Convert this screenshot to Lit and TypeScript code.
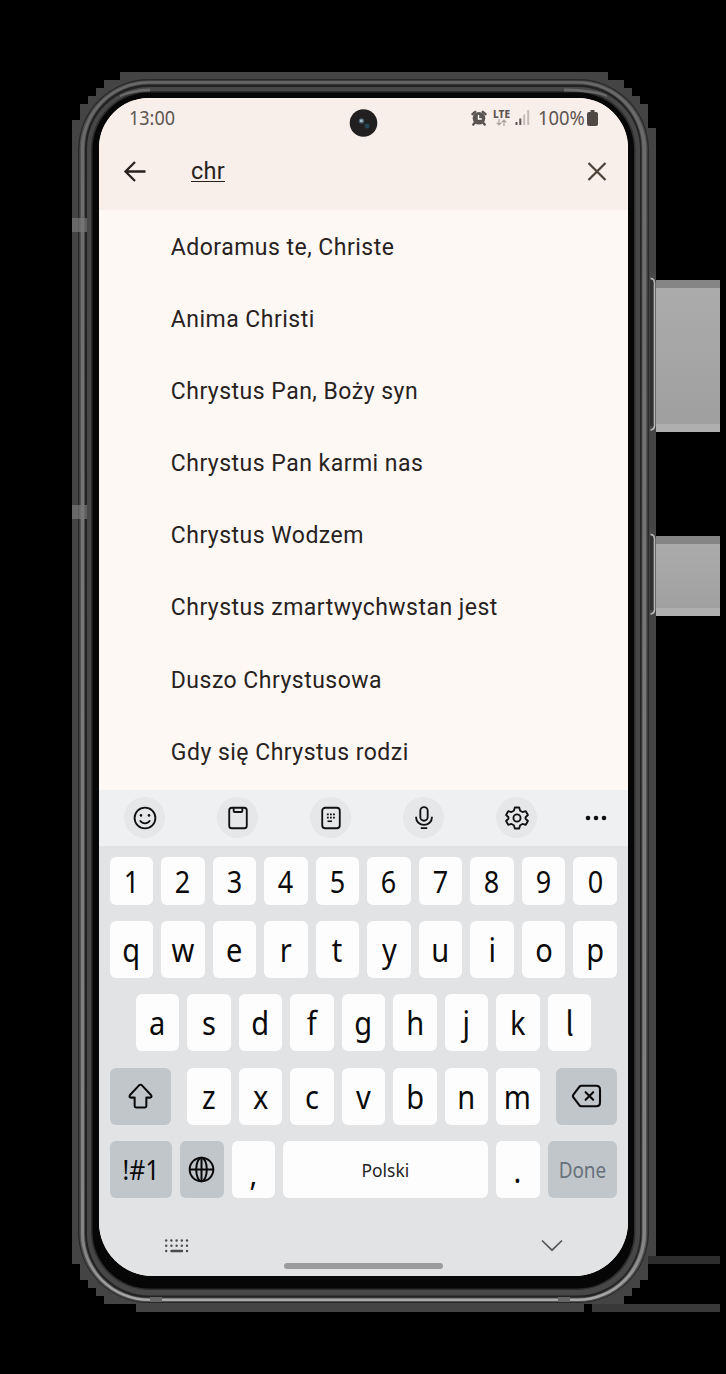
import { LitElement, html, css, svg, nothing } from "lit";
import { customElement, property } from "lit/decorators.js";

const SONGS = [
  "Adoramus te, Christe",
  "Anima Christi",
  "Chrystus Pan, Boży syn",
  "Chrystus Pan karmi nas",
  "Chrystus Wodzem",
  "Chrystus zmartwychwstan jest",
  "Duszo Chrystusowa",
  "Gdy się Chrystus rodzi",
];

const ICONS: Record<string, unknown> = {
  smile: svg`<circle cx="12" cy="12" r="9.600"/><path d="M7.300 14.200c1 1.700 2.700 2.700 4.700 2.700s3.700-1 4.700-2.700"/><g fill="currentColor" stroke="none"><circle cx="8.300" cy="9.600" r="1.200"/><circle cx="15.700" cy="9.600" r="1.200"/></g>`,
  clipboard: svg`<rect x="3.900" y="2.500" width="16.200" height="19" rx="2.400"/><path d="M8 2.500v3q0 1 1 1h6q1 0 1-1v-3"/>`,
  textpad: svg`<rect x="3.900" y="2.500" width="16.200" height="19" rx="2.800"/><g stroke-width="1.500" stroke-dasharray="1.700 1.150"><path d="M8.200 8.700h8M8.200 11.700h8"/></g><path stroke-width="1.500" d="M8.800 15h4.200"/>`,
  mic: svg`<rect x="8.600" y="2" width="6.800" height="12.500" rx="3.400"/><path d="M4.700 10.800v.8a7.300 6.700 0 0 0 14.600 0v-.8M9 21.400h6"/>`,
  gear: svg`<path d="M10 2.300h4l.9 3 2.200 1.200 3-.8 2 3.500-2.200 2.100v1.400l2.200 2.100-2 3.500-3-.8-2.200 1.200-.9 3h-4l-.9-3-2.200-1.200-3 .8-2-3.500 2.200-2.100v-1.400l-2.200-2.100 2-3.500 3 .8 2.200-1.200z"/><circle cx="12" cy="12" r="3.300"/>`,
  shift: svg`<path d="M10.700 2.100q1.300-1.200 2.600 0l8 8.600q1.200 1.800-.6 2.300h-3.500v7.500q0 1.300-1.300 1.300H8.100q-1.300 0-1.300-1.300V13H3.300q-1.800-.5-.6-2.300z"/>`,
  globe: svg`<circle cx="12" cy="12" r="10.500"/><ellipse cx="12" cy="12" rx="4.700" ry="10.500"/><path d="M12 1.500v21M1.500 12h21"/>`,
};

@customElement("kb-key")
class KbKey extends LitElement {
  @property() label = "";
  @property() icon = "";
  @property({ reflect: true }) kind = "";
  static styles = css`
    :host {
      display: flex;
      align-items: center;
      justify-content: center;
      width: 43.500px;
      flex: none;
      background: #fdfdfd;
      border-radius: 6px;
      color: #0a0a0a;
      font: 33px/1 "Noto Sans", sans-serif;
      box-sizing: border-box;
    }
    span { display: block; transform: scaleX(0.88); }
    :host([kind="num"]) { font-size: 30px; }
    :host([kind="num"]) span { transform: scaleX(0.9); padding-top: 2px; }
    :host([kind="tailed"]) { font-family: "Noto Sans CJK JP", "Noto Sans", sans-serif; }
    :host([kind="shift"]), :host([kind="del"]) { width: 61.500px; background: #c1c6ca; }
    :host([kind="sym"]) { width: 62.500px; background: #c1c6ca; font-size: 27px; }
    :host([kind="sym"]) span { transform: scaleX(0.92); white-space: nowrap; }
    :host([kind="globe"]) { background: #c1c6ca; }
    :host([kind="space"]) { width: 205px; font-size: 18.500px; color: #222; }
    :host([kind="space"]) span { transform: scaleX(0.94); }
    :host([kind="done"]) { width: 69.500px; background: #c1c6ca; color: #66717c; font-size: 21px; }
    :host([kind="done"]) span { transform: scaleX(0.9); padding-top: 1px; }
    :host([kind="dot"]) { padding-top: 2px; }
    :host([kind="comma"]) { padding-top: 8px; }
    svg { display: block; fill: none; stroke: currentColor; stroke-linejoin: round; }
  `;
  render() {
    if (this.icon === "del")
      return html`<svg width="31" height="24" viewBox="0 0 31 24" stroke-width="2.100" stroke-linecap="round">
        <path d="M10.500 1.800h14.700q3.800 0 3.800 3.800v12.800q0 3.800-3.800 3.800H10.500q-1.300 0-2.200-1L2.600 13.700q-1.400-1.700 0-3.400l5.700-7.500q.9-1 2.200-1z"/>
        <path d="M14.600 8.200l7.600 7.600M22.200 8.200l-7.600 7.600"/></svg>`;
    if (this.icon)
      return html`<svg width="27" height="27" viewBox="0 0 24 24" stroke-width="1.800">${ICONS[this.icon]}</svg>`;
    return html`<span>${this.label}</span>`;
  }
}

@customElement("phone-frame")
class PhoneFrame extends LitElement {
  static styles = css`:host, svg { display: block; }`;
  private ring(x: number, y: number, r: number, b: number, rad: number, c: string) {
    return svg`<rect x=${x} y=${y} width=${r - x} height=${b - y} rx=${rad} fill=${c}/>`;
  }
  private button(y: number, h: number) {
    return svg`
      <rect x="650" y=${y - 8} width="6" height="9" fill="#484848"/>
      <rect x="656" y=${y} width="64" height=${h} fill="url(#side)"/>
      <rect x="656" y=${y} width="64" height="8" fill="#858585"/>
      <rect x="656" y=${y + h - 8} width="64" height="8" fill="#afafaf"/>
      <rect x="650" y=${y} width="4" height=${h - 6} fill="#303030"/>
      <path d=${`M650.500 ${y - 1.5}q4 0 4 5v${h - 10}q0 4-4 4.500`} fill="none" stroke="#b9b9b9" stroke-width="1.600"/>`;
  }
  render() {
    return html`<svg width="726" height="1374" viewBox="0 0 726 1374">
      <defs>
        <linearGradient id="side" x1="0" y1="0" x2="0" y2="1"><stop offset="0" stop-color="#acacac"/><stop offset="1" stop-color="#9f9f9f"/></linearGradient>
        <linearGradient id="rim" x1="0" y1="0" x2="0" y2="1"><stop offset="0" stop-color="#6a6a6a"/><stop offset=".96" stop-color="#858585"/><stop offset="1" stop-color="#aaaaaa"/></linearGradient>
      </defs>
      <path shape-rendering="crispEdges" fill="#444444" d="M120 72H608V80H624V88H632V96H640V104H648V128H656V1256H648V1280H640V1288H632V1296H624V1304H584V1312H136V1304H104V1296H96V1288H88V1280H80V1264H72V120H80V104H88V96H96V88H104V80H120z"/>
      <rect x="648" y="1256" width="72" height="8" fill="#2d2d2d"/>
      <rect x="592" y="1304" width="128" height="8" fill="#393939"/>
      ${this.ring(78, 79, 649, 1303, 71, "#292929")}
      ${this.ring(79.5, 80.5, 647.5, 1302, 69, "#525252")}
      ${this.ring(81, 81.5, 646, 1301, 68, "url(#rim)")}
      ${this.ring(84, 83.5, 642.5, 1298.5, 65, "#4c4c4c")}
      ${this.ring(85, 84.5, 641.5, 1297.5, 64, "#222222")}
      ${this.ring(87, 87, 640, 1295.5, 62, "#474747")}
      ${this.ring(91, 91, 635.5, 1290, 58, "#2d2d2d")}
      ${this.ring(92.5, 92.5, 634, 1288.5, 57, "#060606")}
      <path d="M120 95Q132 89 150 88.500V91.500Q134 91.500 120 97zM607 95Q595 89 564 88.500V91.500Q593 91.500 607 97z" fill="#6a6a6a"/>
      <g fill="#777" opacity=".7"><rect x="72" y="218" width="15" height="14"/><rect x="72" y="505" width="15" height="14"/></g>
      <rect x="150" y="1297" width="12" height="5" fill="#666"/><rect x="558" y="1297" width="12" height="5" fill="#666"/>
      ${this.button(280, 152)}${this.button(536, 80)}
    </svg>`;
  }
}

@customElement("app-root")
class AppRoot extends LitElement {
  static styles = css`
    :host { display: grid; width: 726px; height: 1374px; background: #000; overflow: hidden; }
    phone-frame, .screen { grid-area: 1 / 1; }
    .screen {
      margin: 98px 98px 98px 98.500px;
      width: 529.500px;
      height: 1178px;
      border-radius: 50px 50px 54px 54px;
      overflow: hidden;
      background: #fef8f4;
      display: flex;
      flex-direction: column;
      position: relative;
      color: #28221e;
      font-family: Roboto, sans-serif;
    }
    svg { display: block; flex: none; }
    header { height: 112px; background: #f9efea; flex: none; }
    .status {
      height: 39px;
      display: flex;
      align-items: center;
      padding: 0 30px 0 30px;
      box-sizing: border-box;
      color: #5c5450;
      font: 20px/39px "Noto Sans", sans-serif;
    }
    .time { flex: 1; }
    .time span, .pct span { display: block; transform: scaleX(0.9); transform-origin: 0 50%; }
    .pct { width: 49px; white-space: nowrap; }
    .pct span { transform: scaleX(0.92); }
    .lte { display: flex; flex-direction: column; align-items: center; width: 17px; margin: 0 5px 0 6px; font: 800 10px/10px "Noto Sans", sans-serif; }
    .signal { margin-right: 8px; }
    .camera { position: absolute; left: 250px; top: 11px; }
    .search { display: flex; align-items: center; height: 67px; padding: 0 20.500px 0 24px; box-sizing: border-box; }
    .query { flex: 1; margin: 1px 0 0 44.500px; font-size: 23.500px; letter-spacing: 0.250px; line-height: 31px; text-decoration: underline; text-decoration-thickness: 1.300px; text-underline-offset: 2px; }
    ul { list-style: none; margin: 0; padding: 0; height: 580px; flex: none; overflow: hidden; }
    li { height: 72.100px; line-height: 75.500px; padding-left: 72.300px; font-size: 23px; letter-spacing: 0.480px; white-space: nowrap; }
    .tools { height: 56px; flex: none; background: #eff0f2; display: flex; align-items: center; padding: 0 20px 0 25.500px; color: #111; }
    .tool { width: 41px; height: 41px; border-radius: 50%; background: #e6e7e9; display: grid; place-items: center; margin: -1px 52.100px 0 0; }
    .tool svg { fill: none; stroke: currentColor; stroke-linejoin: round; }
    .dots { margin-left: -4.500px; }
    .keyboard { flex: 1; background: #e1e3e5; padding: 11.300px 11px 0; display: flex; flex-direction: column; gap: 16.500px; }
    .row { display: flex; justify-content: space-between; height: 57px; flex: none; }
    .row.num { height: 48px; margin-bottom: -1px; }
    .row.mid { padding: 0 26px; }
    .letters { display: flex; gap: 8px; }
    .nav { display: flex; align-items: center; justify-content: space-between; padding: 1px 54.500px 0 54.500px; height: 60px; }
    .handle { width: 159px; height: 6px; border-radius: 3px; background: #9b9c9e; margin: -29px auto 0; flex: none; }
  `;
  private tool(icon: string) {
    return html`<div class="tool"><svg width="26" height="26" viewBox="0 0 24 24" stroke-width="1.700">${ICONS[icon]}</svg></div>`;
  }
  private keys(chars: string, kind = "") {
    return [...chars].map((c) => html`<kb-key label=${c} kind=${kind || (c === "l" ? "tailed" : nothing)}></kb-key>`);
  }
  render() {
    return html`
      <phone-frame></phone-frame>
      <main class="screen">
        <header>
          <div class="status">
            <div class="time"><span>13:00</span></div>
            <svg width="16" height="16" viewBox="0 0 16 16">
              <path d="M3.800 12.700L2.300 14.600M12.200 12.700L13.700 14.600M1.500 4.200L4.200 1.800M14.500 4.200L11.800 1.800" stroke="#5c5450" stroke-width="2.400" stroke-linecap="round"/>
              <circle cx="8" cy="8.300" r="6.300" fill="#5c5450"/><path d="M7.500 5v4h3.300" stroke="#fff" stroke-width="1.400" fill="none"/>
            </svg>
            <div class="lte">LTE
              <svg width="11" height="7" viewBox="0 0 11 7" fill="none" stroke="#aaa19c" stroke-width="1.200"><path d="M3 0v6M.7 3.700L3 6l2.300-2.300M8 7V1M5.700 3.300L8 1l2.300 2.300"/></svg>
            </div>
            <svg class="signal" width="15" height="15" viewBox="0 0 15 15"><path fill="#5c5450" d="M.5 12h2v3h-2zM4.300 8.500h2V15h-2z"/><path fill="#c4bbb6" d="M8.200 4.500h2V15h-2zM12.200 0h2v15h-2z"/></svg>
            <div class="pct"><span>100%</span></div>
            <svg width="11" height="16" viewBox="0 0 11 16"><path fill="#504843" d="M3.500 0h4v2H9q2 0 2 2v10q0 2-2 2H2q-2 0-2-2V4q0-2 2-2h1.500z"/></svg>
          </div>
          <div class="search">
            <svg width="24" height="24" viewBox="0 0 24 24" fill="none" stroke="#28221e" stroke-width="2.300"><path d="M22.500 12.500H3M12 3l-9.500 9.500L12 22"/></svg>
            <div class="query">chr</div>
            <svg width="22" height="22" viewBox="0 0 22 22" stroke="#4d4138" stroke-width="2.300"><path d="M2.500 3L19.500 20M19.500 3L2.500 20"/></svg>
          </div>
        </header>
        <ul>${SONGS.map((s) => html`<li>${s}</li>`)}</ul>
        <div class="tools">
          ${["smile", "clipboard", "textpad", "mic", "gear"].map((i) => this.tool(i))}
          <svg class="dots" width="22" height="6" viewBox="0 0 22 6" fill="#111"><circle cx="3" cy="3" r="2.300"/><circle cx="11" cy="3" r="2.300"/><circle cx="19" cy="3" r="2.300"/></svg>
        </div>
        <div class="keyboard">
          <div class="row num">${this.keys("1234567890", "num")}</div>
          <div class="row">${this.keys("qwertyuiop")}</div>
          <div class="row mid">${this.keys("asdfghjkl")}</div>
          <div class="row">
            <kb-key kind="shift" icon="shift"></kb-key>
            <div class="letters">${this.keys("zxcvbnm")}</div>
            <kb-key kind="del" icon="del"></kb-key>
          </div>
          <div class="row">
            <kb-key kind="sym" label="!#1"></kb-key>
            <kb-key kind="globe" icon="globe"></kb-key>
            <kb-key kind="comma" label=","></kb-key>
            <kb-key kind="space" label="Polski"></kb-key>
            <kb-key kind="dot" label="."></kb-key>
            <kb-key kind="done" label="Done"></kb-key>
          </div>
          <div class="nav">
            <svg width="26" height="14" viewBox="0 0 26 14" fill="#4a4b4d">
              ${[2.2, 7.4, 12.6, 17.8, 23].map((x) => [1.5, 6.7].map((y) => svg`<circle cx=${x} cy=${y} r="1.200"/>`))}
              <circle cx="2.200" cy="12" r="1.200"/><circle cx="23" cy="12" r="1.200"/><rect x="6.300" y="10.700" width="12.800" height="2.600" rx="1"/>
            </svg>
            <svg width="22" height="14" viewBox="0 0 22 14" fill="none" stroke="#58595b" stroke-width="1.700"><path d="M1 1.500l10 9.700 10-9.700"/></svg>
          </div>
          <div class="handle"></div>
        </div>
        <svg class="camera" width="29" height="29" viewBox="0 0 29 29"><circle cx="14.500" cy="14" r="13.800" fill="#211f1f"/><circle cx="12.500" cy="12" r="2.800" fill="#44596a"/><circle cx="12.300" cy="11.800" r="1.500" fill="#a4bfcc"/><circle cx="18" cy="17" r="2.500" fill="#234654"/></svg>
      </main>`;
  }
}
